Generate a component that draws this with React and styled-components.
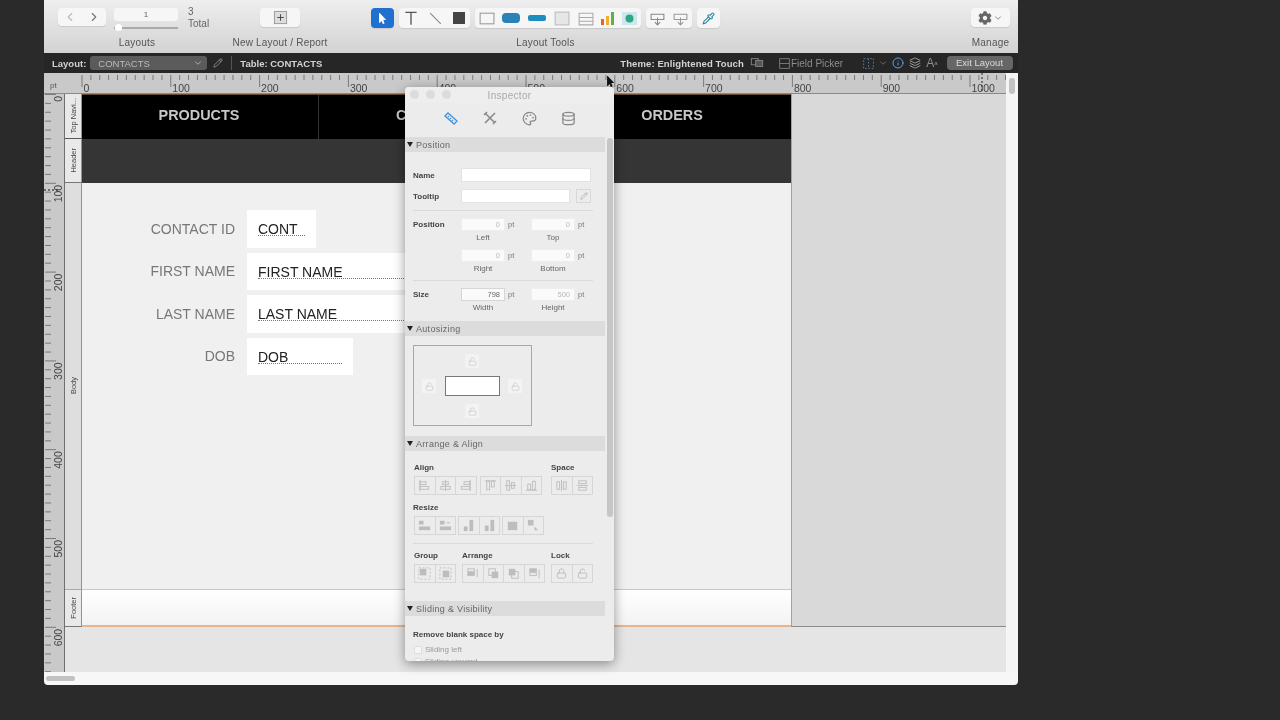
import React from 'react';
import styled, { createGlobalStyle } from 'styled-components';
import { ChevronLeft, ChevronRight, ChevronDown, Pencil, Database, Palette, Lock, LockOpen, Pipette, Layers, Info } from 'lucide-react';
import { FaCog, FaMousePointer } from 'react-icons/fa';

const GlobalStyle = createGlobalStyle`
  html, body {
    margin: 0;
    padding: 0;
    background: #2b2b2b;
    font-family: "Liberation Sans", Arial, sans-serif;
    -webkit-font-smoothing: antialiased;
  }
  * { box-sizing: border-box; }
`;

const Page = styled.div`
  width: 1280px;
  height: 720px;
  padding-left: 44px;
  overflow: hidden;
  background: #2a2a2a;
  filter: blur(0.35px);
`;
const MacWindow = styled.div`
  position: relative;
  width: 974px;
  height: 685px;
  display: flex;
  flex-direction: column;
  border-radius: 0 0 4px 4px;
  overflow: hidden;
`;

/* toolbar */
const Toolbar = styled.div`
  height: 53px;
  flex: none;
  display: flex;
  background: linear-gradient(#eeeeee, #d3d3d3);
`;
const ToolGroup = styled.div`
  width: ${p => p.$w}px;
  margin-left: ${p => p.$ml || 0}px;
  flex: none;
  display: flex;
  flex-direction: column;
  align-items: center;
`;
const ToolRow = styled.div`
  height: 36.5px;
  padding-top: 8px;
  display: flex;
  align-self: stretch;
  justify-content: ${p => p.$justify || 'center'};
  padding-left: ${p => p.$pl || 0}px;
`;
const ToolLabel = styled.div`
  font-size: 10px;
  letter-spacing: 0.2px;
  color: #555;
  line-height: 12px;
  margin-left: ${p => p.$ml || 0}px;
`;
const Pill = styled.div`
  height: ${p => p.$h || 20}px;
  width: ${p => p.$w}px;
  flex: none;
  margin-left: ${p => p.$ml || 0}px;
  display: flex;
  align-items: center;
  justify-content: ${p => p.$justify || 'space-around'};
  padding: 0 ${p => p.$pad || 0}px;
  background: ${p => p.$blue ? '#2070d0' : '#f6f6f6'};
  border-radius: 4px;
  box-shadow: 0 1px 1px rgba(0, 0, 0, 0.1);
  color: ${p => p.$blue ? '#fff' : '#666'};
`;
const PageStepper = styled.div`
  width: 64px;
  flex: none;
  margin-left: 8px;
  display: flex;
  flex-direction: column;
`;
const PageField = styled.div`
  height: 13px;
  background: #f6f6f6;
  border-radius: 3px;
  font-size: 8px;
  line-height: 13px;
  text-align: center;
  color: #666;
`;
const Slider = styled.div`
  position: relative;
  height: 2px;
  margin-top: 6px;
  background: #aaa;
  &::before {
    content: '';
    position: absolute;
    left: 1px;
    top: -3px;
    width: 7px;
    height: 7px;
    border-radius: 50%;
    background: #fff;
  }
`;
const TotalText = styled.div`
  margin-left: 10px;
  flex: none;
  font-size: 10px;
  line-height: 12px;
  margin-top: -2px;
  color: #666;
`;

/* layout mode bar */
const ModeBar = styled.div`
  height: 20px;
  flex: none;
  display: flex;
  align-items: center;
  padding-left: 8px;
  background: #262626;
  color: #d0d0d0;
  font-size: 9.5px;
  font-weight: 700;
`;
const ModeText = styled.span`
  margin-left: ${p => p.$ml || 0}px;
  color: ${p => p.$dim ? '#8d8d8d' : '#d4d4d4'};
  font-weight: ${p => p.$dim ? 400 : 700};
  font-size: ${p => p.$size || 9.5}px;
  letter-spacing: ${p => p.$track || 0}px;
  white-space: nowrap;
  flex: none;
`;
const LayoutSelect = styled.div`
  width: 117px;
  height: 14px;
  margin-left: 4px;
  padding: 0 4px 0 8px;
  display: flex;
  align-items: center;
  justify-content: space-between;
  background: #5b5b5b;
  border-radius: 3px;
  color: #bbb;
  font-weight: 400;
`;
const ModeDivider = styled.div`
  width: 1px;
  height: 14px;
  margin-left: 8px;
  background: #555;
`;
const ModeIcon = styled.span`
  display: flex;
  flex: none;
  margin-left: ${p => p.$ml || 0}px;
`;
const ExitButton = styled.div`
  width: 66px;
  height: 14px;
  flex: none;
  margin-left: 9px;
  background: #666;
  border-radius: 4px;
  color: #ddd;
  font-weight: 400;
  font-size: 9.5px;
  line-height: 14px;
  text-align: center;
`;

/* rulers and canvas */
const Workspace = styled.div`
  flex: 1;
  display: flex;
  min-height: 0;
`;
const WorkColumn = styled.div`
  width: 962px;
  display: flex;
  flex-direction: column;
`;
const ScrollColumn = styled.div`
  flex: 1;
  padding: 5px 3px;
  background: #f5f5f5;
`;
const ScrollThumb = styled.div`
  width: ${p => p.$w}px;
  height: ${p => p.$h}px;
  border-radius: 4px;
  background: #c2c2c2;
`;
const HScroll = styled.div`
  height: 13px;
  flex: none;
  padding: 4px 2px;
  background: #f7f7f7;
`;
const RulerSvg = styled.svg`
  display: block;
  flex: none;
  background: #c9c9c9;
`;
const CanvasRow = styled.div`
  flex: 1;
  display: flex;
  min-height: 0;
`;
const Sheet = styled.div`
  flex: 1;
  display: grid;
  grid-template-columns: 17px 709px 1fr;
  grid-template-rows: 45px 44px 407px 37px 1fr;
  background: #e5e5e5;
  border-left: 1px solid #6f6f6f;
`;
const PartTab = styled.div`
  display: flex;
  align-items: center;
  justify-content: center;
  background: ${p => p.$bg || '#e9e9e9'};
  border-bottom: 1px solid ${p => p.$line || '#8a8a8a'};
  border-right: 1px solid #b98a62;
  font-size: 7.5px;
  color: #444;
  span {
    writing-mode: vertical-rl;
    transform: rotate(180deg);
    white-space: nowrap;
  }
`;
const Outside = styled.div`
  grid-column: 3;
  grid-row: 1 / 5;
  background: #d9d9d9;
  border-left: 1px solid #d8945e;
  border-bottom: 1px solid #8a8a8a;
`;
const NavBand = styled.div`
  display: grid;
  grid-template-columns: 236px 236px 1fr;
  background: #000;
  border-top: 1px solid #6b4a32;
`;
const NavItem = styled.div`
  display: flex;
  align-items: center;
  justify-content: center;
  border-left: ${p => p.$first ? 'none' : '1px solid #333'};
  color: #c8c8c8;
  font-size: 14.4px;
  font-weight: 700;
  padding: 0 2px 5px 0;
`;
const HeaderBand = styled.div`
  background: #353535;
`;
const BodyBand = styled.div`
  display: flex;
  flex-direction: column;
  gap: 5px;
  padding-top: 27px;
  background: #f0f0f0;
  border-bottom: 1px solid #c8c8c8;
`;
const FooterBand = styled.div`
  background: linear-gradient(#ffffff, #f3f3f3);
  border-bottom: 2px solid #e8b48c;
`;
const FieldRow = styled.div`
  height: 37.5px;
  display: flex;
  align-items: center;
`;
const FieldLabel = styled.div`
  width: 153px;
  text-align: right;
  color: #777;
  font-size: 14px;
`;
const FieldBox = styled.div`
  width: ${p => p.$w}px;
  height: 100%;
  margin-left: 12px;
  padding: 11px 11px 0;
  background: #fff;
  color: #222;
  font-size: 14px;
`;
const FieldValue = styled.div`
  height: 15px;
  line-height: 16px;
  border-bottom: 1px dotted #777;
`;

/* inspector */
const Inspector = styled.div`
  position: absolute;
  left: 361px;
  top: 87px;
  width: 209px;
  height: 574px;
  display: flex;
  flex-direction: column;
  overflow: hidden;
  background: #ececec;
  border-radius: 4px;
  box-shadow: 0 3px 12px rgba(0, 0, 0, 0.4);
`;
const TitleBar = styled.div`
  position: relative;
  height: 16px;
  flex: none;
  display: flex;
  align-items: center;
  justify-content: center;
  background: #eeeeee;
  color: #aaa;
  font-size: 10px;
  letter-spacing: 0.3px;
`;
const Lights = styled.div`
  position: absolute;
  left: 5px;
  top: 3px;
  display: flex;
  gap: 7px;
`;
const Light = styled.div`
  width: 9px;
  height: 9px;
  border-radius: 50%;
  background: #dcdcdc;
`;
const PaneTabs = styled.div`
  height: 34px;
  flex: none;
  padding: 6px 0 0 37px;
  display: flex;
  gap: 21px;
`;
const PaneTab = styled.div`
  width: 18px;
  height: 18px;
  display: flex;
  align-items: center;
  justify-content: center;
  color: ${p => p.$on ? '#4a94d8' : '#888'};
`;
const PaneBody = styled.div`
  position: relative;
  flex: 1;
  min-height: 0;
  overflow: hidden;
  padding-right: 9px;
`;
const PaneScroll = styled.div`
  position: absolute;
  right: 1px;
  top: 1px;
  width: 6px;
  height: 379px;
  border-radius: 3px;
  background: #c6c6c6;
`;
const SectionHead = styled.div`
  height: 15px;
  margin-top: ${p => p.$mt || 0}px;
  display: flex;
  align-items: center;
  gap: 3px;
  padding-left: 2px;
  background: #dcdcdc;
  color: #666;
  font-size: 9px;
  letter-spacing: 0.3px;
  &::before {
    content: '';
    width: 0;
    height: 0;
    border-left: 3px solid transparent;
    border-right: 3px solid transparent;
    border-top: 5px solid #222;
  }
`;
const PropRow = styled.div`
  display: flex;
  align-items: ${p => p.$align || 'center'};
  height: ${p => p.$h}px;
  margin-top: ${p => p.$mt || 0}px;
  padding-left: ${p => p.$pl || 8}px;
`;
const PropLabel = styled.div`
  width: 48px;
  flex: none;
  padding-top: ${p => p.$pt || 0}px;
  font-size: 8px;
  font-weight: 700;
  color: #444;
`;
const TextInput = styled.div`
  width: ${p => p.$w}px;
  height: 14px;
  flex: none;
  background: #fff;
  border: 1px solid #e2e2e2;
`;
const MiniButton = styled.div`
  width: 15px;
  height: 14px;
  margin-left: 6px;
  display: flex;
  align-items: center;
  justify-content: center;
  border: 1px solid #d8d8d8;
  color: #aaa;
`;
const Divider = styled.div`
  height: 1px;
  margin: ${p => p.$top}px 12px ${p => p.$bottom}px 8px;
  background: #dadada;
`;
const NumCell = styled.div`
  width: 70px;
  flex: none;
  display: grid;
  grid-template-columns: 44px 1fr;
  align-items: center;
`;
const NumInput = styled.div`
  height: 13px;
  padding-right: 4px;
  background: #fafafa;
  border: 1px solid ${p => p.$strong ? '#d6d6d6' : '#eee'};
  font-size: 7.5px;
  line-height: 12px;
  text-align: right;
  color: ${p => p.$strong ? '#666' : '#bbb'};
`;
const Unit = styled.div`
  padding-left: 3px;
  font-size: 7.5px;
  color: #777;
`;
const NumCaption = styled.div`
  width: 44px;
  margin-top: 2px;
  grid-column: 1;
  text-align: center;
  font-size: 8px;
  color: #666;
`;
const AutoBox = styled.div`
  position: relative;
  width: 119px;
  height: 81px;
  margin: 9px 0 10px 8px;
  border: 1px solid #a8a8a8;
`;
const AutoCenter = styled.div`
  position: absolute;
  left: 31px;
  top: 30px;
  width: 55px;
  height: 20px;
  background: #fff;
  border: 1px solid #777;
`;
const AutoLock = styled.div`
  position: absolute;
  left: ${p => p.$x}px;
  top: ${p => p.$y}px;
  width: 14px;
  height: 14px;
  display: flex;
  align-items: center;
  justify-content: center;
  background: #f3f3f3;
  color: #ccc;
`;
const GroupRow = styled.div`
  display: flex;
  padding-left: ${p => p.$pl || 9}px;
  margin-top: ${p => p.$mt || 0}px;
`;
const GroupCol = styled.div`
  width: ${p => p.$w}px;
  flex: none;
`;
const GroupTitle = styled.div`
  height: 12px;
  font-size: 8px;
  font-weight: 700;
  color: #444;
  line-height: 12px;
`;
const BtnStrip = styled.div`
  display: flex;
  margin-top: 2px;
  padding-left: 1px;
`;
const StripWrap = styled.div`
  display: flex;
  margin-left: ${p => p.$ml || 0}px;
  gap: ${p => p.$gap || 3}px;
`;
const StripBtn = styled.div`
  width: 21.5px;
  height: 19px;
  display: flex;
  align-items: center;
  justify-content: center;
  border: 1px solid #d6d6d6;
  margin-left: -1px;
  color: #bdbdbd;
`;
const BlankLabel = styled.div`
  margin: 14px 0 0 8px;
  font-size: 8px;
  font-weight: 700;
  color: #444;
`;
const CheckRow = styled.div`
  display: flex;
  align-items: center;
  gap: 3px;
  margin: ${p => p.$mt}px 0 0 9px;
  font-size: 8px;
  color: #999;
`;
const CheckBox = styled.div`
  width: 8px;
  height: 8px;
  background: #f6f6f6;
  border: 1px solid #ddd;
  border-radius: 1px;
`;
const Cursor = styled.div`
  position: absolute;
  left: 561px;
  top: 76px;
  color: #111;
  line-height: 0;
`;

const Ic = ({ s = 16, children, stroke = 'currentColor', w = 1 }) => (
  <svg width={s} height={s} viewBox="0 0 16 16" fill="none" stroke={stroke} strokeWidth={w}>{children}</svg>
);

const HRuler = () => {
  const ticks = [];
  for (let i = 0; i <= 105; i++) {
    const x = 38 + i * 8.88;
    ticks.push(<line key={i} x1={x} x2={x} y1={2} y2={i % 10 === 0 ? 14 : 7} stroke="#666" strokeWidth="0.8" />);
  }
  return (
    <RulerSvg width="962" height="21">
      {ticks}
      <line x1="0" x2="962" y1="20.5" y2="20.5" stroke="#8a8a8a" />
      <text x="6" y="15" fontSize="8" fill="#555" fontFamily="Liberation Sans">pt</text>
      {[0, 100, 200, 300, 400, 500, 600, 700, 800, 900, 1000].map((n, i) => (
        <text key={n} x={38 + i * 88.8 + 1.5} y="19" fontSize="10.5" fill="#444" fontFamily="Liberation Sans">{n}</text>
      ))}
      <line x1="938" x2="938" y1="0" y2="20" stroke="#222" strokeDasharray="2 2" />
    </RulerSvg>
  );
};

const VRuler = () => {
  const ticks = [];
  for (let i = 0; i <= 65; i++) {
    const y = i * 8.88 + 0.5;
    ticks.push(<line key={i} y1={y} y2={y} x1={1} x2={i % 10 === 0 ? 12 : 7} stroke="#666" strokeWidth="0.8" />);
  }
  return (
    <RulerSvg width="20" height="578">
      {ticks}
      {[0, 100, 200, 300, 400, 500, 600].map((n, i) => (
        <text key={n} transform={`translate(18 ${i * 88.8 + 2}) rotate(-90)`} textAnchor="end" fontSize="10.5" fill="#444" fontFamily="Liberation Sans">{n}</text>
      ))}
      <line x1="0" x2="16" y1="96" y2="96" stroke="#111" strokeDasharray="2 2" />
    </RulerSvg>
  );
};

const alignIcons = [
  <><path d="M3 2v12" /><rect x="3.5" y="4" width="6" height="3" /><rect x="3.5" y="9" width="9" height="3" /></>,
  <><path d="M8 2v12" /><rect x="5" y="4" width="6" height="3" /><rect x="3" y="9" width="10" height="3" /></>,
  <><path d="M13 2v12" /><rect x="6.5" y="4" width="6" height="3" /><rect x="3.5" y="9" width="9" height="3" /></>,
  <><path d="M2 3h12" /><rect x="4" y="3.5" width="3" height="9" /><rect x="9" y="3.5" width="3" height="6" /></>,
  <><path d="M2 8h12" /><rect x="4" y="3" width="3" height="10" /><rect x="9" y="5" width="3" height="6" /></>,
  <><path d="M2 13h12" /><rect x="4" y="6.5" width="3" height="6" /><rect x="9" y="3.5" width="3" height="9" /></>,
];
const spaceIcons = [
  <><path d="M8 2v12" /><rect x="3" y="4" width="3" height="8" /><rect x="10" y="4" width="3" height="8" /></>,
  <><path d="M2 8h12" /><rect x="4" y="3" width="8" height="3" /><rect x="4" y="10" width="8" height="3" /></>,
];
const resizeIcons = [
  <g fill="currentColor" stroke="none"><rect x="2" y="3" width="5" height="4" /><rect x="2" y="9" width="12" height="4" /></g>,
  <g fill="currentColor" stroke="none"><rect x="2" y="3" width="5" height="4" /><path d="M9 4.500h4v1H9z" /><rect x="2" y="9" width="12" height="4" /></g>,
  <g fill="currentColor" stroke="none"><rect x="3" y="9" width="4" height="5" /><rect x="9" y="2" width="4" height="12" /></g>,
  <g fill="currentColor" stroke="none"><rect x="3" y="8" width="4" height="6" /><rect x="9" y="2" width="4" height="12" /></g>,
  <g fill="currentColor" stroke="none"><rect x="3" y="4" width="10" height="9" /></g>,
  <g fill="currentColor" stroke="none"><rect x="2" y="2" width="6" height="6" /><path d="M9 9l4 4h-4z" /></g>,
];
const groupIcons = [
  <><rect x="3" y="3" width="7" height="7" fill="currentColor" stroke="none" /><rect x="2" y="2" width="12" height="12" strokeDasharray="2 2" /></>,
  <><rect x="5" y="5" width="7" height="7" fill="currentColor" stroke="none" /><rect x="2" y="2" width="12" height="12" strokeDasharray="2 2" /></>,
];
const arrangeIcons = [
  <><rect x="3" y="3" width="7" height="3" /><rect x="3" y="7" width="7" height="3" fill="currentColor" /><path d="M13 3v9" /></>,
  <><rect x="3" y="3" width="7" height="7" /><rect x="6" y="6" width="7" height="7" fill="currentColor" stroke="none" /></>,
  <><rect x="6" y="6" width="7" height="7" /><rect x="3" y="3" width="7" height="7" fill="currentColor" stroke="none" /></>,
  <><rect x="3" y="3" width="7" height="3" fill="currentColor" /><rect x="3" y="7" width="7" height="3" /><path d="M13 4v9" /></>,
];

const Strip = ({ icons }) => (
  <BtnStrip>
    {icons.map((ic, i) => <StripBtn key={i}><Ic s={15}>{ic}</Ic></StripBtn>)}
  </BtnStrip>
);

const Num = ({ v, cap, strong }) => (
  <NumCell>
    <NumInput $strong={strong}>{v}</NumInput>
    <Unit>pt</Unit>
    <NumCaption>{cap}</NumCaption>
  </NumCell>
);

const Tools = () => (
  <ToolRow $justify="flex-start">
    <Pill $w={23} $blue><FaMousePointer size={11} /></Pill>
    <Pill $w={71} $ml={5}>
      <Ic s={18} w={1.2} stroke="#555"><path d="M3 3h10M8 3v11" /></Ic>
      <Ic s={17} stroke="#888"><path d="M3 3l10 10" /></Ic>
      <Ic s={16}><rect x="2" y="2" width="12" height="12" fill="#444" stroke="none" /></Ic>
    </Pill>
    <Pill $w={166} $ml={5}>
      <Ic s={17}><rect x="2" y="3" width="13" height="10" stroke="#999" /></Ic>
      <svg width="20" height="12"><rect x="1" y="1" width="18" height="10" rx="4" fill="#2a82b8" /></svg>
      <svg width="20" height="8"><rect x="1" y="1" width="18" height="6" rx="2" fill="#1d8cc0" /></svg>
      <Ic s={17}><rect x="2" y="2" width="13" height="12" fill="#e6e6e6" stroke="#bbb" /></Ic>
      <Ic s={17}><path d="M2 3h13v11H2zM2 7h13M2 10.500h13" stroke="#aaa" /></Ic>
      <svg width="15" height="14"><rect x="1" y="8" width="3" height="6" fill="#e8622c" /><rect x="6" y="5" width="3" height="9" fill="#eeb02c" /><rect x="11" y="1" width="3" height="13" fill="#5fb04a" /></svg>
      <svg width="17" height="15"><rect x="1" y="1" width="15" height="13" fill="#cfe6ea" /><circle cx="8.500" cy="7.500" r="4" fill="#2fa58c" /></svg>
    </Pill>
    <Pill $w={46} $ml={5}>
      <Ic s={17}><path d="M2 4h12v5H2zM8 7v7M5.500 11.500L8 14l2.500-2.500" stroke="#888" /></Ic>
      <Ic s={17}><path d="M2 4h12v5H2zM8 7v7M5.500 11.500L8 14l2.500-2.500" stroke="#999" /></Ic>
    </Pill>
    <Pill $w={23} $ml={5}><Pipette size={13} color="#2a8aa0" /></Pill>
  </ToolRow>
);

export default function App() {
  return (
    <Page>
      <GlobalStyle />
      <MacWindow>
        <Toolbar>
          <ToolGroup $w={143}>
            <ToolRow $justify="flex-start" $pl={14}>
              <Pill $w={48} $h={18}>
                <ChevronLeft size={14} color="#bbb" />
                <ChevronRight size={14} color="#777" />
              </Pill>
              <PageStepper>
                <PageField>1</PageField>
                <Slider />
              </PageStepper>
              <TotalText>3<br />Total</TotalText>
            </ToolRow>
            <ToolLabel $ml={43}>Layouts</ToolLabel>
          </ToolGroup>
          <ToolGroup $w={100} $ml={43}>
            <ToolRow><Pill $w={40} $h={19} $justify="center"><Ic s={15}><rect x="1.500" y="1.500" width="13" height="13" fill="#ddd" stroke="#999" /><path d="M8 4.500v7M4.500 8h7" stroke="#444" /></Ic></Pill></ToolRow>
            <ToolLabel>New Layout / Report</ToolLabel>
          </ToolGroup>
          <ToolGroup $w={349} $ml={41}>
            <Tools />
            <ToolLabel>Layout Tools</ToolLabel>
          </ToolGroup>
          <ToolGroup $w={45} $ml={248}>
            <ToolRow>
              <Pill $w={39} $h={19} $pad={6}><FaCog size={14} color="#666" /><ChevronDown size={10} color="#777" /></Pill>
            </ToolRow>
            <ToolLabel>Manage</ToolLabel>
          </ToolGroup>
        </Toolbar>

        <ModeBar>
          <span>Layout:</span>
          <LayoutSelect>CONTACTS<ChevronDown size={10} /></LayoutSelect>
          <Pencil size={10} color="#999" style={{ marginLeft: 6 }} />
          <ModeDivider />
          <ModeText $ml={8}>Table: CONTACTS</ModeText>
          <ModeText $ml={298} $track={0.1}>Theme: Enlightened Touch</ModeText>
          <ModeIcon $ml={6}><Ic s={14} stroke="#888"><rect x="1.500" y="3" width="8" height="7" /><rect x="6.500" y="5" width="8" height="7" fill="#555" /></Ic></ModeIcon>
          <ModeIcon $ml={14}><Ic s={13} stroke="#888"><path d="M2 2h12v12H2zM2 8h12" /></Ic></ModeIcon>
          <ModeText $dim $size={10}>Field Picker</ModeText>
          <ModeIcon $ml={19}><Ic s={13} stroke="#6a8ab0"><rect x="2" y="2" width="12" height="12" strokeDasharray="2 2" /><path d="M8 2v12" strokeDasharray="2 2" /></Ic></ModeIcon>
          <ModeIcon $ml={3}><ChevronDown size={10} color="#777" /></ModeIcon>
          <ModeIcon $ml={4}><Info size={12} color="#5aa0e0" /></ModeIcon>
          <ModeIcon $ml={5}><Layers size={12} color="#999" /></ModeIcon>
          <ModeText $dim $ml={5} $size={12}>A</ModeText>
          <ModeText $dim $size={6}>a</ModeText>
          <ExitButton>Exit Layout</ExitButton>
        </ModeBar>

        <Workspace>
          <WorkColumn>
            <HRuler />
            <CanvasRow>
              <VRuler />
              <Sheet>
                <PartTab $line="#555"><span>Top Navi...</span></PartTab>
                <NavBand>
                  <NavItem $first>PRODUCTS</NavItem>
                  <NavItem>CONTACTS</NavItem>
                  <NavItem>ORDERS</NavItem>
                </NavBand>
                <Outside />
                <PartTab $line="#777"><span>Header</span></PartTab>
                <HeaderBand />
                <PartTab $bg="#dedede" $line="#aaa"><span>Body</span></PartTab>
                <BodyBand>
                  <FieldRow><FieldLabel>CONTACT ID</FieldLabel><FieldBox $w={69}><FieldValue>CONT</FieldValue></FieldBox></FieldRow>
                  <FieldRow><FieldLabel>FIRST NAME</FieldLabel><FieldBox $w={350}><FieldValue>FIRST NAME</FieldValue></FieldBox></FieldRow>
                  <FieldRow><FieldLabel>LAST NAME</FieldLabel><FieldBox $w={350}><FieldValue>LAST NAME</FieldValue></FieldBox></FieldRow>
                  <FieldRow><FieldLabel>DOB</FieldLabel><FieldBox $w={106}><FieldValue>DOB</FieldValue></FieldBox></FieldRow>
                </BodyBand>
                <PartTab $line="#777"><span>Footer</span></PartTab>
                <FooterBand />
              </Sheet>
            </CanvasRow>
          </WorkColumn>
          <ScrollColumn><ScrollThumb $w={6} $h={16} /></ScrollColumn>
        </Workspace>
        <HScroll><ScrollThumb $w={29} $h={5} /></HScroll>

        <Inspector>
          <TitleBar>
            <Lights><Light /><Light /><Light /></Lights>
            Inspector
          </TitleBar>
          <PaneTabs>
            <PaneTab $on><Ic s={16} w={1.4}><path d="M2 6l3-3 9 8-3 3zM5 6l1 1M7 8l1 1M9 10l1 1" /></Ic></PaneTab>
            <PaneTab><Ic s={16} w={1.6}><path d="M3 3l10 10M13 3L3 13M2 5l3-3M11 14l3-3" /></Ic></PaneTab>
            <PaneTab><Palette size={15} /></PaneTab>
            <PaneTab><Database size={15} /></PaneTab>
          </PaneTabs>
          <PaneBody>
            <PaneScroll />
            <SectionHead>Position</SectionHead>
            <PropRow $h={14} $mt={16}><PropLabel>Name</PropLabel><TextInput $w={130} /></PropRow>
            <PropRow $h={14} $mt={7}>
              <PropLabel>Tooltip</PropLabel>
              <TextInput $w={109} />
              <MiniButton><Pencil size={8} /></MiniButton>
            </PropRow>
            <Divider $top={7} $bottom={7} />
            <PropRow $h={32} $align="flex-start">
              <PropLabel $pt={2}>Position</PropLabel>
              <Num v="0" cap="Left" />
              <Num v="0" cap="Top" />
            </PropRow>
            <PropRow $h={24} $mt={-1} $align="flex-start" $pl={56}>
              <Num v="0" cap="Right" />
              <Num v="0" cap="Bottom" />
            </PropRow>
            <Divider $top={7} $bottom={7} />
            <PropRow $h={28} $align="flex-start">
              <PropLabel $pt={2}>Size</PropLabel>
              <Num v="798" cap="Width" strong />
              <Num v="500" cap="Height" />
            </PropRow>
            <SectionHead $mt={5}>Autosizing</SectionHead>
            <AutoBox>
              <AutoCenter />
              <AutoLock $x={51} $y={8}><LockOpen size={9} /></AutoLock>
              <AutoLock $x={8} $y={33}><LockOpen size={9} /></AutoLock>
              <AutoLock $x={94} $y={33}><LockOpen size={9} /></AutoLock>
              <AutoLock $x={51} $y={58}><LockOpen size={9} /></AutoLock>
            </AutoBox>
            <SectionHead>Arrange &amp; Align</SectionHead>
            <GroupRow $mt={11}>
              <GroupCol $w={137}>
                <GroupTitle>Align</GroupTitle>
                <StripWrap><Strip icons={alignIcons.slice(0, 3)} /><Strip icons={alignIcons.slice(3)} /></StripWrap>
              </GroupCol>
              <GroupCol $w={44}>
                <GroupTitle>Space</GroupTitle>
                <Strip icons={spaceIcons} />
              </GroupCol>
            </GroupRow>
            <GroupRow $mt={7} $pl={8}>
              <GroupCol $w={140}>
                <GroupTitle>Resize</GroupTitle>
                <StripWrap $gap={2} $ml={1}><Strip icons={resizeIcons.slice(0, 2)} /><Strip icons={resizeIcons.slice(2, 4)} /><Strip icons={resizeIcons.slice(4)} /></StripWrap>
              </GroupCol>
            </GroupRow>
            <Divider $top={8} $bottom={6} />
            <GroupRow>
              <GroupCol $w={48}><GroupTitle>Group</GroupTitle><Strip icons={groupIcons} /></GroupCol>
              <GroupCol $w={89}><GroupTitle>Arrange</GroupTitle><Strip icons={arrangeIcons} /></GroupCol>
              <GroupCol $w={44}>
                <GroupTitle>Lock</GroupTitle>
                <BtnStrip>
                  <StripBtn><Lock size={11} /></StripBtn>
                  <StripBtn><LockOpen size={11} /></StripBtn>
                </BtnStrip>
              </GroupCol>
            </GroupRow>
            <SectionHead $mt={18}>Sliding &amp; Visibility</SectionHead>
            <BlankLabel>Remove blank space by</BlankLabel>
            <CheckRow $mt={6}><CheckBox />Sliding left</CheckRow>
            <CheckRow $mt={3}><CheckBox />Sliding upward</CheckRow>
          </PaneBody>
        </Inspector>
        <Cursor><FaMousePointer size={11} /></Cursor>
      </MacWindow>
    </Page>
  );
}
